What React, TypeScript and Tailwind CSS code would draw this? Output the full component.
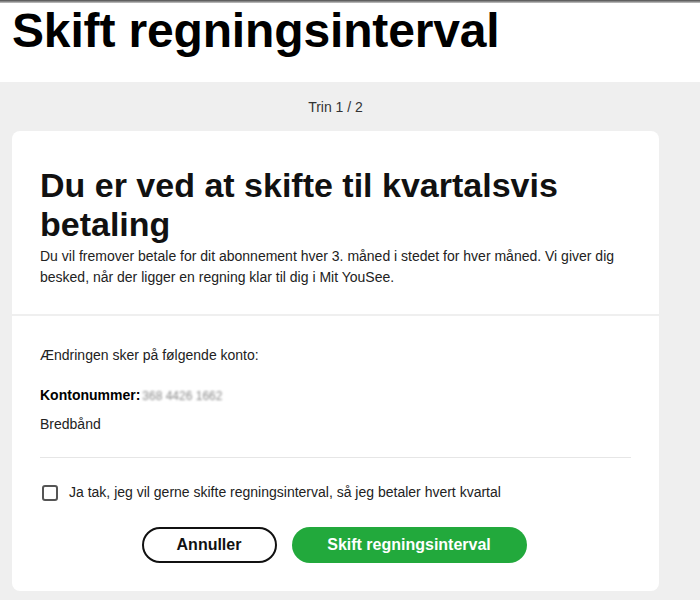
import { useState } from "react";

export default function App() {
  const [accepted, setAccepted] = useState(false);

  return (
    <div className="min-h-[600px] bg-[#efefef] font-['Liberation_Sans',Arial,sans-serif] text-[#1a1a1a]">
      <div className="h-[3px] bg-gradient-to-b from-[#4d4d4d] to-[#c8c8c8]" />
      <header className="h-[79px] bg-white px-3">
        <h1 className="pt-[4px] text-[48px] font-bold leading-[48px] tracking-[-0.15px] text-black">
          Skift regningsinterval
        </h1>
      </header>

      <main className="ml-3 w-[647px]">
        <p className="h-[49px] pt-[15px] text-center text-sm text-[#333]">Trin 1 / 2</p>

        <div className="rounded-lg bg-white">
          <section className="px-7 pb-[26px] pt-[35px]">
            <h2 className="text-[34px] font-bold leading-[39px] text-[#111]">
              Du er ved at skifte til kvartalsvis betaling
            </h2>
            <p className="mt-0.5 text-sm leading-[21px] text-[#222]">
              Du vil fremover betale for dit abonnement hver 3. måned i stedet for hver måned. Vi giver dig
              besked, når der ligger en regning klar til dig i Mit YouSee.
            </p>
          </section>

          <div className="h-[2px] bg-[#efefef]" />

          <section className="px-7 pb-7 pt-[29px]">
            <p className="text-sm leading-[21px] text-[#222]">Ændringen sker på følgende konto:</p>
            <p className="mt-[19px] text-sm leading-[21px]">
              <span className="font-bold text-black">Kontonummer:</span>
              <span className="ml-0.5 inline-block text-[12px] text-[#8a8a8a] blur-[1.2px]">368 4426 1662</span>
            </p>
            <p className="mt-[7px] text-sm leading-[21px] text-[#222]">Bredbånd</p>

            <div className="mt-[22px] h-px bg-[#e6e6e6]" />

            <label className="mt-6 flex items-center gap-[11px] text-sm leading-[21px] text-[#222]">
              <input
                type="checkbox"
                checked={accepted}
                onChange={(event) => setAccepted(event.target.checked)}
                className="peer sr-only"
              />
              <span className="ml-0.5 h-4 w-4 rounded-[3px] border-2 border-[#555] bg-white peer-checked:bg-[#22a93c]" />
              Ja tak, jeg vil gerne skifte regningsinterval, så jeg betaler hvert kvartal
            </label>

            <div className="mt-6 flex justify-center gap-[15px] pr-[3px]">
              <button
                type="button"
                className="h-9 w-[135px] rounded-full border-2 border-[#111] bg-white text-base font-bold text-[#111]"
              >
                Annuller
              </button>
              <button
                type="button"
                className="h-9 w-[235px] rounded-full bg-[#22a93c] text-base font-bold text-white"
              >
                Skift regningsinterval
              </button>
            </div>
          </section>
        </div>
      </main>
    </div>
  );
}
